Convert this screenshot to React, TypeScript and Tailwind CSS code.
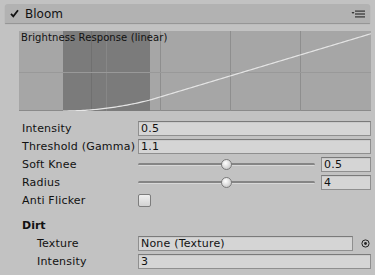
import React from "react";

const font = { fontFamily: '"DejaVu Sans", Verdana, sans-serif' };

function Field({ value, w }: { value?: string; w: string }) {
  return (
    <div
      className={`${w} h-[15px] bg-[#d5d5d5] border border-[#8f8f8f] border-t-[#7a7a7a] flex items-center pl-[2px] text-[11px] text-[#111] leading-none tracking-[0.2px] shadow-[inset_0_1px_0_rgba(0,0,0,0.05)]`}
    >
      {value}
    </div>
  );
}

function Slider({ value }: { value: string }) {
  return (
    <div className="flex items-center w-[233px]">
      <div className="relative w-[177px] h-[15px] flex items-center">
        <div className="w-full h-[3px] rounded-full bg-[#858585] border-b border-[#d8d8d8]" />
        <div className="absolute left-[83px] top-[2px] w-[11px] h-[11px] rounded-full border border-[#7c7c7c] bg-[radial-gradient(circle_at_40%_35%,#ffffff,#d6d6d6_60%,#b9b9b9)]" />
      </div>
      <div className="ml-[6px]">
        <Field value={value} w="w-[50px]" />
      </div>
    </div>
  );
}

function Row({ label, children, indent }: { label: string; children: React.ReactNode; indent?: boolean }) {
  return (
    <div className="flex h-[18px] items-center">
      <div className={`${indent ? "pl-[37px]" : "pl-[22px]"} w-[138px] text-[11px] text-[#111] whitespace-nowrap leading-none tracking-[0.2px]`}>
        {label}
      </div>
      {children}
    </div>
  );
}

function Graph() {
  const pts: string[] = [];
  for (let x = 63; x <= 372; x += 2) {
    let y: number;
    if (x < 150) {
      const t = (x - 63) / 87;
      y = 80 - 11 * t * t;
    } else {
      y = 69 - 0.3 * (x - 150);
    }
    pts.push(`${x - 19},${y.toFixed(2)}`);
  }
  return (
    <div className="relative ml-[19px] mt-[8px] w-[352px] h-[80px] bg-[#a6a6a6] border-b border-[#8a8a8a]">
      <svg width="352" height="80" className="absolute left-0 top-0">
        <rect x="44" y="0" width="87" height="80" fill="#7b7b7b" />
        <line x1="72.5" y1="0" x2="72.5" y2="80" stroke="#707070" strokeWidth="1" />
        <line x1="87.5" y1="0" x2="87.5" y2="80" stroke="#878787" strokeWidth="1" />
        <line x1="141.5" y1="0" x2="141.5" y2="80" stroke="#8e8e8e" strokeWidth="1" />
        <line x1="211.5" y1="0" x2="211.5" y2="80" stroke="#8e8e8e" strokeWidth="1" />
        <line x1="281.5" y1="0" x2="281.5" y2="80" stroke="#8e8e8e" strokeWidth="1" />
        <line x1="0" y1="41.5" x2="352" y2="41.5" stroke="#999999" strokeWidth="1" />
        <polyline points={pts.join(" ")} fill="none" stroke="#e6e6e6" strokeWidth="1.2" />
      </svg>
      <div className="absolute left-[2px] top-[2px] text-[10px] text-[#111] leading-none tracking-[0.1px]">Brightness Response (linear)</div>
    </div>
  );
}

export default function App() {
  return (
    <div className="w-[375px] h-[275px] bg-[#c2c2c2] overflow-hidden" style={font}>
      <div className="pt-[4px] px-[5px]">
        <div className="h-[19px] bg-[#b2b2b2] rounded-t-[3px] shadow-[0_1px_1px_rgba(0,0,0,0.25)] flex items-center">
          <svg width="9" height="9" viewBox="0 0 9 9" className="ml-[5px]">
            <path d="M1 4.8 L3.3 7.3 L8 1.2" fill="none" stroke="#111" strokeWidth="1.8" />
          </svg>
          <span className="ml-[6px] text-[12px] text-[#111] leading-none">Bloom</span>
          <div className="ml-auto mr-[5px] flex items-center">
            <svg width="14" height="8" viewBox="0 0 14 8">
              <path d="M0.5 2 L3.5 2 L2 4 Z" fill="#333" />
              <rect x="4" y="0.5" width="10" height="1.2" fill="#333" />
              <rect x="4" y="3.4" width="10" height="1.2" fill="#333" />
              <rect x="4" y="6.3" width="10" height="1.2" fill="#333" />
            </svg>
          </div>
        </div>
      </div>
      <Graph />
      <div className="pt-[8px]">
        <Row label="Intensity">
          <Field value="0.5" w="w-[233px]" />
        </Row>
        <Row label="Threshold (Gamma)">
          <Field value="1.1" w="w-[233px]" />
        </Row>
        <Row label="Soft Knee">
          <Slider value="0.5" />
        </Row>
        <Row label="Radius">
          <Slider value="4" />
        </Row>
        <Row label="Anti Flicker">
          <div className="w-[13px] h-[13px] rounded-[2px] border border-[#7d7d7d] bg-[linear-gradient(#f0f0f0,#d2d2d2)]" />
        </Row>
        <div className="h-[7px]" />
        <div className="flex h-[18px] items-center pl-[22px] text-[11px] font-bold text-[#111] leading-none">Dirt</div>
        <Row label="Texture" indent>
          <Field value="None (Texture)" w="w-[215px]" />
          <svg width="9" height="9" viewBox="0 0 9 9" className="ml-[8px]">
            <circle cx="4.5" cy="4.5" r="3.6" fill="none" stroke="#222" strokeWidth="1" />
            <circle cx="4.5" cy="4.5" r="1.4" fill="#222" />
          </svg>
        </Row>
        <Row label="Intensity" indent>
          <Field value="3" w="w-[233px]" />
        </Row>
      </div>
    </div>
  );
}
